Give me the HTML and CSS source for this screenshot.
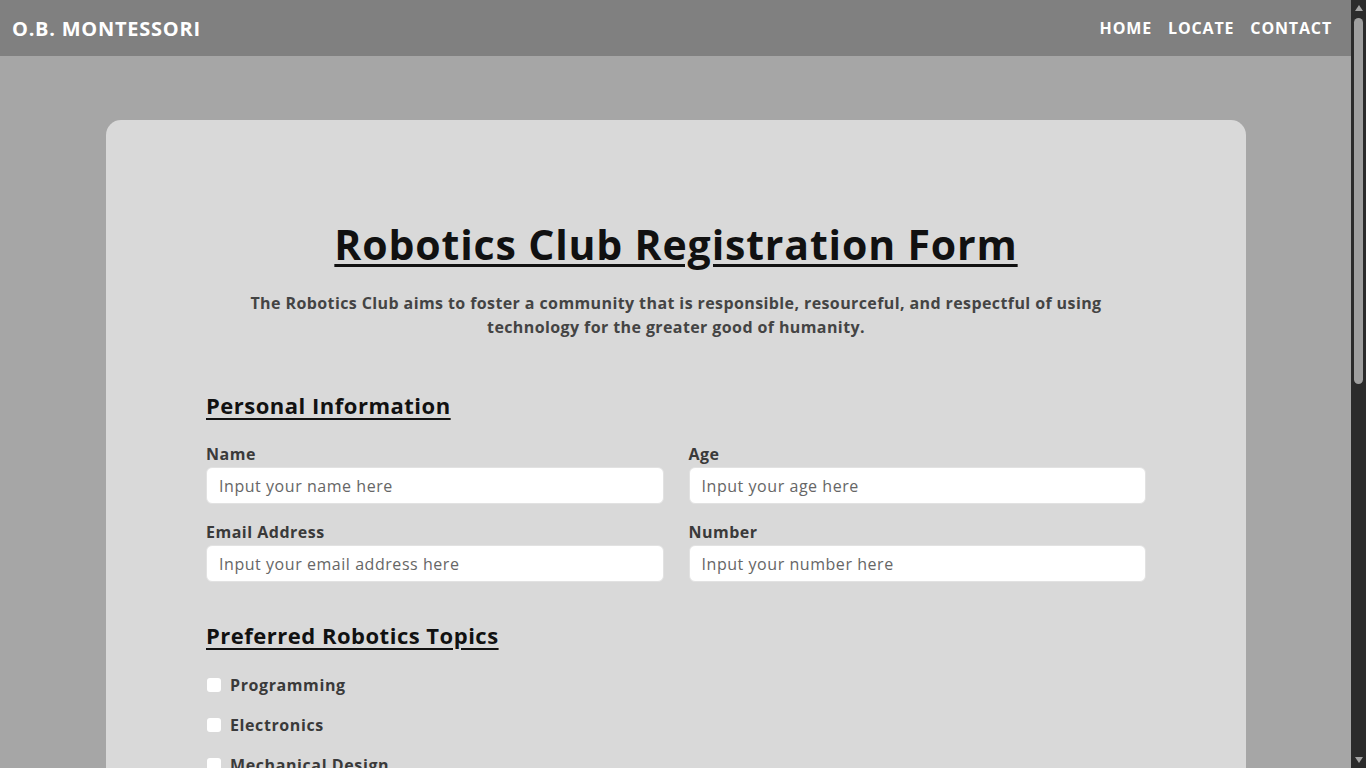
FILE: index.html
```html
<!DOCTYPE html>
<html lang="en">
<head>
<meta charset="utf-8">
<title>Robotics Club Registration Form</title>
<link rel="stylesheet" href="styles.css">
</head>
<body>
<div class="viewport">
<header class="navbar">
  <a class="brand" href="#">O.B. MONTESSORI</a>
  <nav class="nav-links">
    <a href="#">HOME</a>
    <a href="#">LOCATE</a>
    <a href="#">CONTACT</a>
  </nav>
</header>
<main class="page">
  <section class="card">
    <h1 class="title">Robotics Club Registration Form</h1>
    <p class="intro">The Robotics Club aims to foster a community that is responsible, resourceful, and respectful of using technology for the greater good of humanity.</p>

    <h2 class="section-title">Personal Information</h2>
    <div class="field-grid">
      <div class="field">
        <label for="name">Name</label>
        <input id="name" type="text" placeholder="Input your name here">
      </div>
      <div class="field">
        <label for="age">Age</label>
        <input id="age" type="text" placeholder="Input your age here">
      </div>
      <div class="field">
        <label for="email">Email Address</label>
        <input id="email" type="text" placeholder="Input your email address here">
      </div>
      <div class="field">
        <label for="number">Number</label>
        <input id="number" type="text" placeholder="Input your number here">
      </div>
    </div>

    <h2 class="section-title topics-title">Preferred Robotics Topics</h2>
    <div class="checks">
      <label class="check"><span class="box"></span>Programming</label>
      <label class="check"><span class="box"></span>Electronics</label>
      <label class="check"><span class="box"></span>Mechanical Design</label>
      <label class="check"><span class="box"></span>Artificial Intelligence</label>
      <label class="check"><span class="box"></span>Sensors</label>
    </div>
    <div class="spacer"></div>
  </section>
</main>
</div>
<div class="scrollbar" aria-hidden="true">
  <span class="arrow-up"></span>
  <span class="thumb"></span>
  <span class="arrow-down"></span>
</div>
</body>
</html>
```

FILE: styles.css
```css
body {
  margin: 0;
  background: #a6a6a6;
  font-family: "Open Sans", "DejaVu Sans", sans-serif;
  color: #111;
}
.viewport {
  margin-right: 15px;
}
.navbar {
  height: 56px;
  background: #808080;
  display: flex;
  align-items: center;
  justify-content: space-between;
  padding: 0 19px 0 12px;
}
.brand {
  color: #fff;
  text-decoration: none;
  font-weight: 700;
  font-size: 20px;
  letter-spacing: 0.75px;
}
.nav-links {
  display: flex;
  gap: 16px;
}
.nav-links a {
  color: #fff;
  text-decoration: none;
  font-weight: 700;
  font-size: 16px;
  letter-spacing: 0.85px;
}
.page {
  padding: 64px 105px 60px 106px;
}
.card {
  background: #d9d9d9;
  border-radius: 15px;
  padding: 100px 100px 80px;
}
.title {
  margin: 0;
  text-align: center;
  font-size: 41px;
  line-height: 48px;
  font-weight: 700;
  letter-spacing: 0.85px;
  text-decoration: underline;
  text-decoration-thickness: 3px;
  text-underline-offset: 4px;
  color: #111;
}
.intro {
  margin: 23px auto 0;
  max-width: 880px;
  text-align: center;
  font-size: 16px;
  line-height: 24px;
  font-weight: 700;
  letter-spacing: 0.4px;
  color: #444;
}
.section-title {
  margin: 51px 0 0;
  font-size: 22px;
  line-height: 30px;
  font-weight: 700;
  letter-spacing: 0.5px;
  text-decoration: underline;
  text-decoration-thickness: 2px;
  text-underline-offset: 4px;
  color: #111;
}
.field-grid {
  margin-top: 24px;
  display: grid;
  grid-template-columns: 1fr 1fr;
  column-gap: 25px;
  row-gap: 18px;
}
.field {
  display: flex;
  flex-direction: column;
  gap: 3px;
}
.field label {
  font-size: 16px;
  line-height: 20px;
  font-weight: 700;
  letter-spacing: 0.5px;
  color: #3a3a3a;
}
.field input {
  height: 37px;
  box-sizing: border-box;
  border: 1px solid #e2e2e2;
  border-radius: 6px;
  background: #fff;
  padding: 0 12px;
  font-family: inherit;
  font-size: 16px;
  letter-spacing: 0.55px;
  color: #222;
  outline: none;
}
.field input::placeholder {
  color: #666;
}
.topics-title {
  margin-top: 38px;
}
.checks {
  margin-top: 23px;
  display: flex;
  flex-direction: column;
  gap: 16px;
}
.check {
  display: flex;
  align-items: center;
  gap: 9px;
  height: 24px;
  font-size: 16px;
  font-weight: 700;
  letter-spacing: 0.6px;
  color: #3a3a3a;
}
.box {
  width: 14px;
  height: 14px;
  margin-left: 1px;
  background: #fff;
  border-radius: 3px;
}
.spacer {
  height: 200px;
}
.scrollbar {
  position: fixed;
  top: 0;
  right: 0;
  width: 15px;
  height: 100vh;
  background: #2b2b2b;
  display: flex;
  flex-direction: column;
  align-items: center;
}
.arrow-up {
  margin-top: 5px;
  width: 0;
  height: 0;
  border-left: 4px solid transparent;
  border-right: 4px solid transparent;
  border-bottom: 6px solid #a3a3a3;
}
.thumb {
  margin-top: 7px;
  width: 9px;
  height: 366px;
  border-radius: 5px;
  background: #9f9f9f;
}
.arrow-down {
  margin-top: auto;
  margin-bottom: 5px;
  width: 0;
  height: 0;
  border-left: 4px solid transparent;
  border-right: 4px solid transparent;
  border-top: 6px solid #a3a3a3;
}
```
